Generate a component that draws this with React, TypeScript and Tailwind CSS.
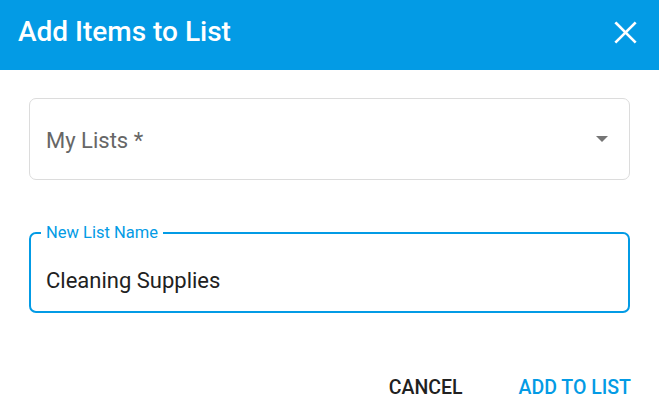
import { X } from "lucide-react";

const App = () => {
  return (
    <div
      className="w-[659px] h-[417px] bg-white flex flex-col overflow-hidden"
      style={{ fontFamily: "Roboto, 'Liberation Sans', sans-serif" }}
    >
      <div className="h-[70px] bg-[#039be5] flex items-start justify-between pl-[18px] pr-[15px] pt-[13px]">
        <h1 className="text-[28px] leading-[38px] font-medium text-white">
          Add Items to List
        </h1>
        <button className="mt-[1px] text-white">
          <X size={37} strokeWidth={1.7} strokeLinecap="square" />
        </button>
      </div>

      <div className="px-[29px] pt-[28px] flex flex-col">
        {/* select */}
        <div className="h-[82px] border border-[#dcdcdc] rounded-[7px] flex items-center justify-between pl-[16px] pr-[21px]">
          <span className="text-[22px] text-[#666666] pt-[2px]">My Lists *</span>
          <svg width="12" height="6" viewBox="0 0 12 6">
            <path d="M0 0 L12 0 L6 6 Z" fill="#757575" />
          </svg>
        </div>

        {/* focused text field */}
        <div className="relative mt-[52px] h-[81px] border-2 border-[#039be5] rounded-[7px] flex items-center pl-[15px] pt-[15px]">
          <span className="absolute -top-[12px] left-[10px] bg-white px-[5px] text-[16.5px] leading-[22px] text-[#039be5]">
            New List Name
          </span>
          <span className="text-[22px] text-[#212121]">Cleaning Supplies</span>
        </div>
      </div>

      <div className="flex justify-end items-center gap-[56px] pr-[28px] mt-[60px]">
        <button className="text-[19.5px] font-medium text-[#212121]">CANCEL</button>
        <button className="text-[19.5px] font-medium text-[#039be5]">ADD TO LIST</button>
      </div>
    </div>
  );
};

export default App;
